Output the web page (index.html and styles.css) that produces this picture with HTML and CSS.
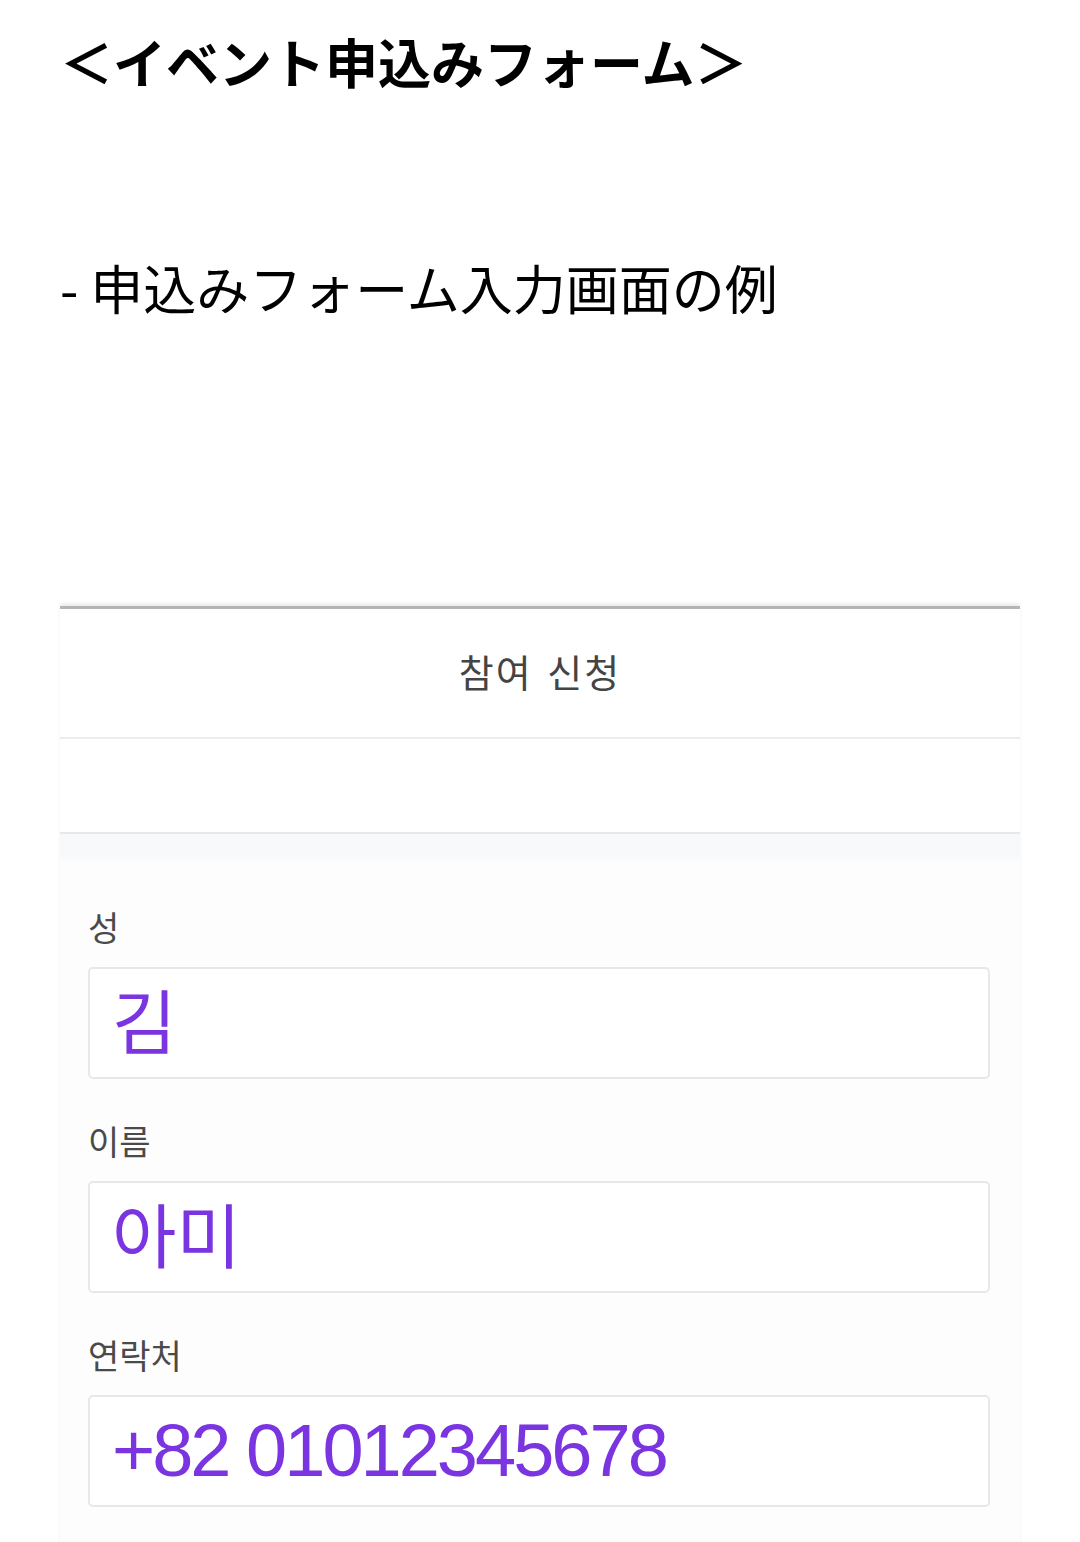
FILE: index.html
```html
<!DOCTYPE html>
<html lang="ja">
<head>
  <meta charset="utf-8">
  <title>イベント申込みフォーム</title>
  <link rel="stylesheet" href="styles.css">
</head>
<body>
  <h1 class="title">＜イベント申込みフォーム＞</h1>
  <p class="caption">- 申込みフォーム入力画面の例</p>

  <!-- form screenshot -->
  <div class="form-shot">
    <div class="form-head">참여 신청</div>
    <div class="form-gap"></div>
    <div class="form-body">
      <div class="field">
        <label class="field-label">성</label>
        <div class="field-input">김</div>
      </div>
      <div class="field">
        <label class="field-label">이름</label>
        <div class="field-input">아미</div>
      </div>
      <div class="field">
        <label class="field-label">연락처</label>
        <div class="field-input field-num">+82 01012345678</div>
      </div>
    </div>
  </div>
</body>
</html>
```

FILE: styles.css
```css
body {
  margin: 0;
  padding: 0 60px;
  background: #fff;
  color: #000;
  font-family: "Noto Sans CJK JP", "Noto Sans", sans-serif;
}
.title {
  margin: 0;
  padding-top: 21px;
  font-size: 53px;
  line-height: 80px;
  font-weight: 700;
}
.caption {
  margin: 146px 0 0;
  font-size: 53px;
  line-height: 80px;
  font-weight: 400;
}
.form-shot {
  margin-top: 279px;
  border-top: 3px solid #b4b4b4;
  box-shadow: 0 -3px 3px #eee;
  font-family: "Noto Sans CJK KR", sans-serif;
}
.form-head {
  height: 128px;
  line-height: 124px;
  text-align: center;
  font-size: 38px;
  letter-spacing: 2px;
  word-spacing: 4px;
  color: #444;
  border-bottom: 2px solid #ececec;
}
.form-gap {
  height: 93px;
  border-bottom: 2px solid #e6e8ea;
}
.form-body {
  padding: 0 30px 40px 28px;
  background: linear-gradient(#f8f9fb 0, #f8f9fb 22px, #fdfdfd 30px);
}
.field-label {
  display: block;
  padding-top: 30px;
  height: 64px;
  line-height: 64px;
  margin-bottom: 8px;
  font-size: 34px;
  color: #4a4a4a;
}
.field:first-child .field-label {
  padding-top: 61px;
}
.field-input {
  height: 108px;
  line-height: 100px;
  padding-left: 22px;
  border: 2px solid #e8e8e8;
  border-radius: 5px;
  background: #fff;
  font-size: 70px;
  color: #7a35e0;
}
.field-num {
  font-family: "Liberation Sans", sans-serif;
  font-size: 74px;
  line-height: 108px;
  letter-spacing: -3px;
}
```
